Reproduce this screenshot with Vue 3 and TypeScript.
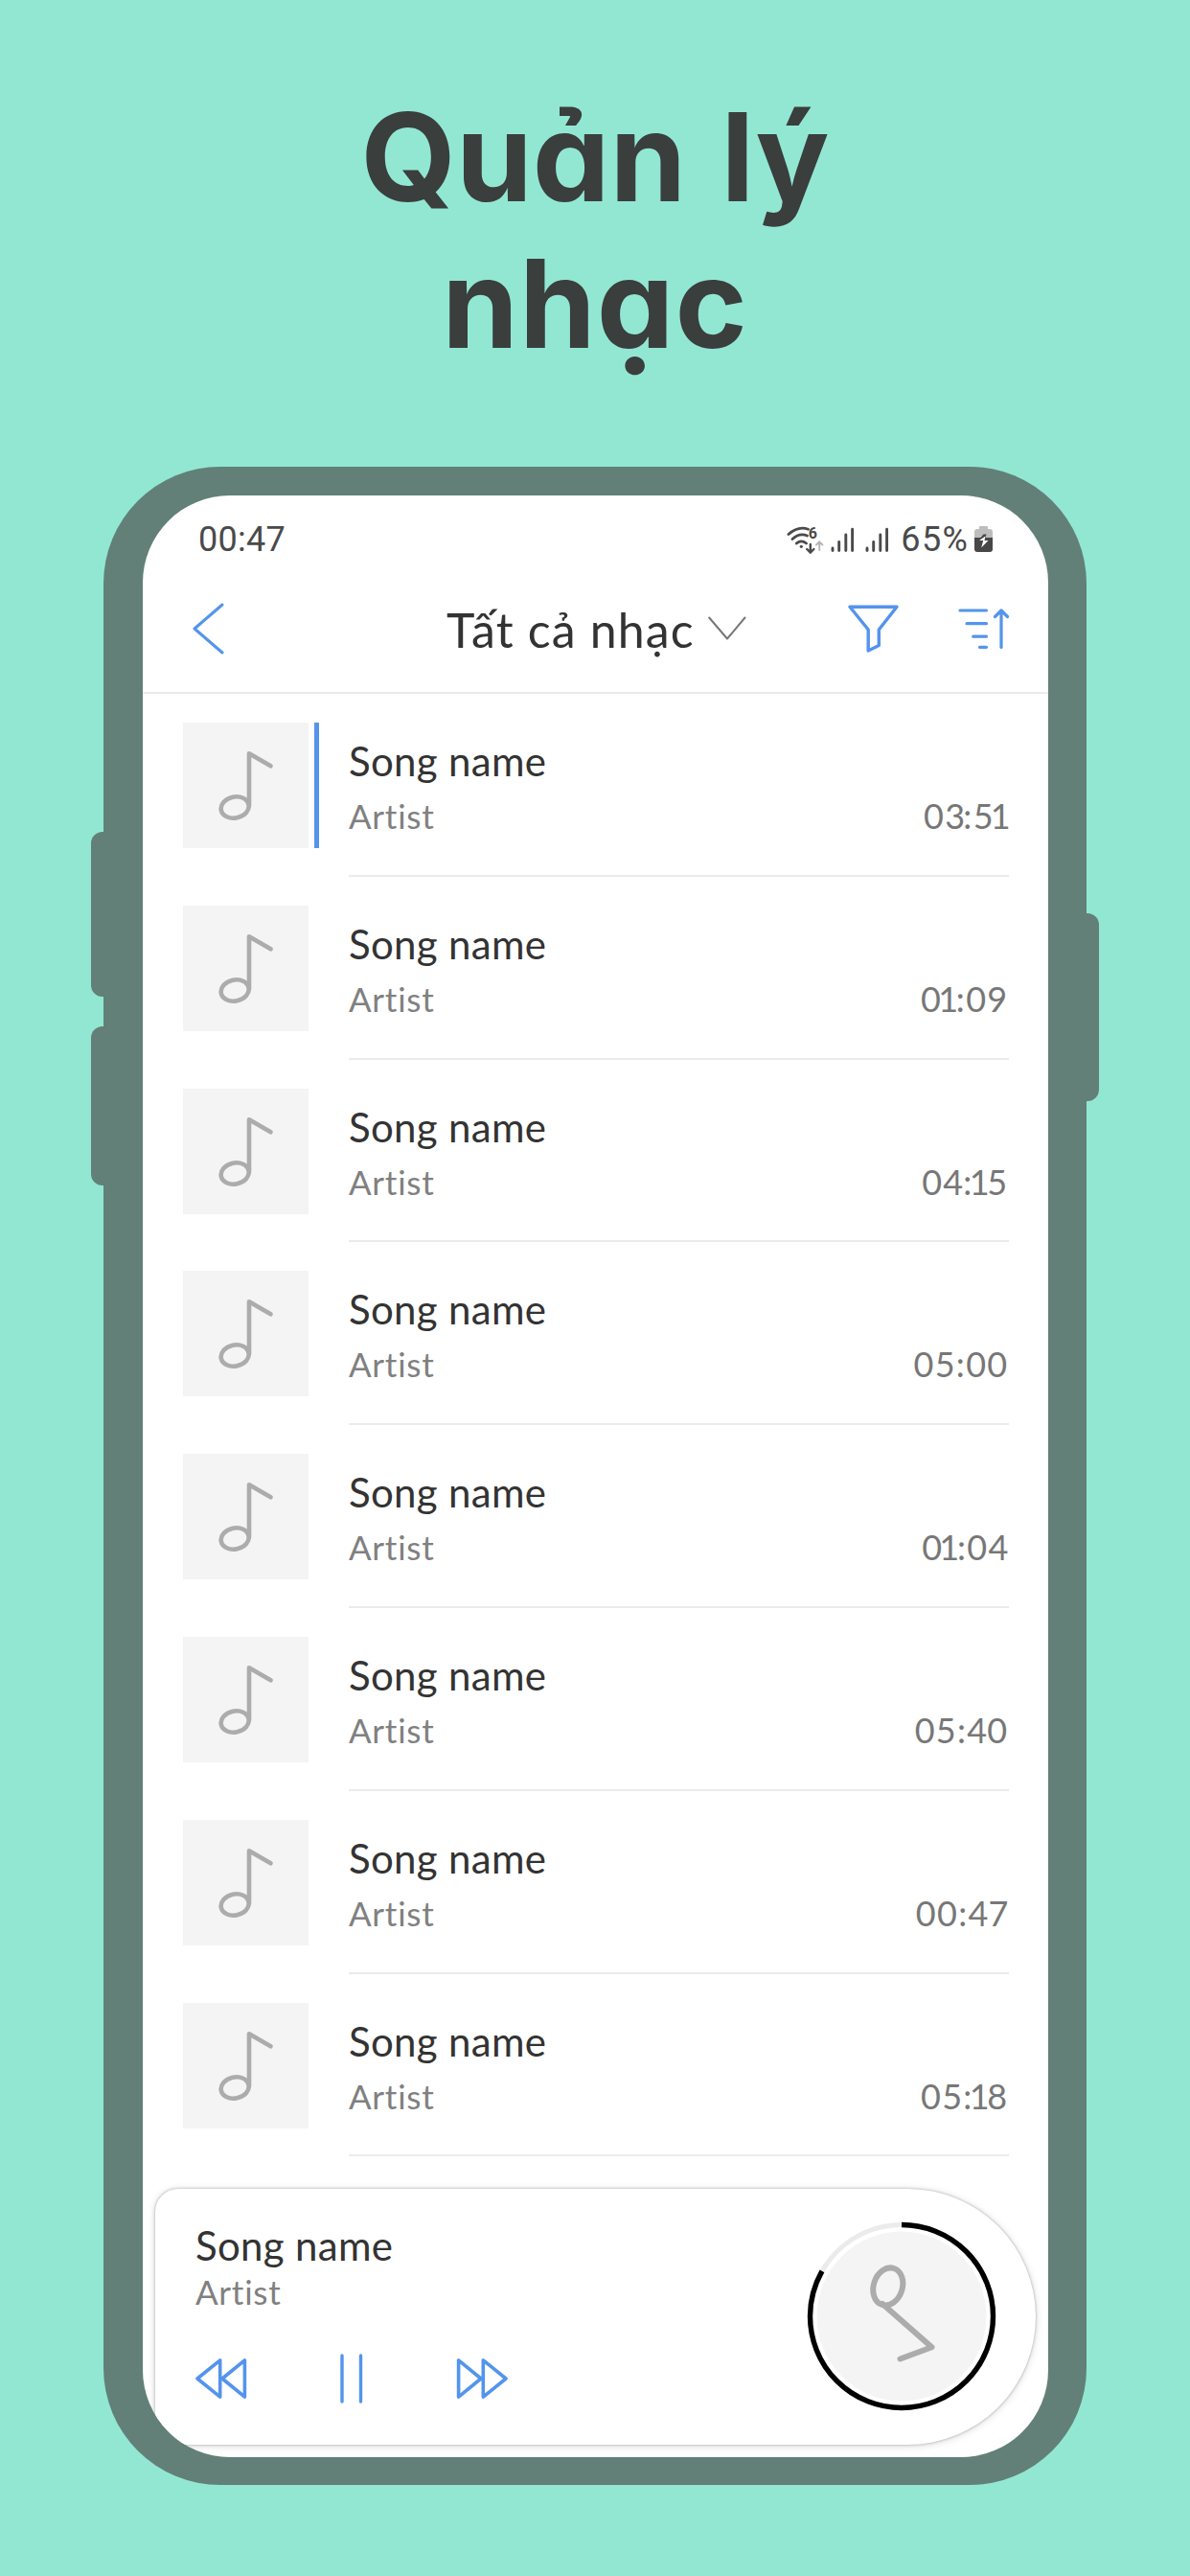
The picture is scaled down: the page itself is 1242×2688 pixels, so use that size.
<script setup lang="ts">
interface Song {
  title: string
  artist: string
  time: string
  active?: boolean
}

const songs: Song[] = [
  { title: 'Song name', artist: 'Artist', time: '03:51', active: true },
  { title: 'Song name', artist: 'Artist', time: '01:09' },
  { title: 'Song name', artist: 'Artist', time: '04:15' },
  { title: 'Song name', artist: 'Artist', time: '05:00' },
  { title: 'Song name', artist: 'Artist', time: '01:04' },
  { title: 'Song name', artist: 'Artist', time: '05:40' },
  { title: 'Song name', artist: 'Artist', time: '00:47' },
  { title: 'Song name', artist: 'Artist', time: '05:18' },
]

const circumference = 2 * Math.PI * 95.5
const progress = 0.831
</script>

<template>
  <main class="poster">
    <h1 class="headline">
      <span class="line one">Quản lý</span>
      <span class="line two">nhạc</span>
    </h1>

    <section class="phone">
      <i class="key left-a"></i>
      <i class="key left-b"></i>
      <i class="key right"></i>

      <div class="screen">
        <div class="status">
          <span class="clock">00:47</span>
          <svg class="radio" width="112" height="32" viewBox="820 546 112 32" fill="none" stroke="#4a4a4a" stroke-linecap="round">
            <path d="M822 556.5Q832 547.5 842.5 551.2" stroke-width="2.8" />
            <path d="M826 561.5Q833.5 554.5 841.5 558" stroke-width="2.8" />
            <path d="M830.3 566Q835.3 561.8 840.6 566" stroke-width="2.8" />
            <circle cx="835.3" cy="569.3" r="1.6" fill="#4a4a4a" stroke="none" />
            <text x="842.8" y="561" class="gen">6</text>
            <path d="M844.8 567v8M841.2 572l3.6 3.6l3.6-3.6" stroke-width="2.4" />
            <path d="M854.2 573v-8M851 567.5l3.2-3.2l3.2 3.2" stroke="#b4b4b4" stroke-width="1.9" />
            <path d="M868 571v2.5M874.7 564.5v9M881.8 557v16.5M888.6 551.3v22.2" stroke-width="2.9" />
            <path d="M904 571v2.5M910.7 564.5v9M917.8 557v16.5M924.6 551.3v22.2" stroke-width="2.9" />
          </svg>
          <span class="percent">65%</span>
          <svg class="battery" width="20" height="28" viewBox="0 0 20 28">
            <path d="M5 3V1q0-1 1-1h7q1 0 1 1v2h2q3 0 3 3v7H0V6q0-3 3-3z" fill="#bdbdbd" />
            <path d="M0 12h19v12q0 3-3 3H3q-3 0-3-3z" fill="#474747" />
            <path d="M9.5 8.5l3 0l-1 3.5h-5z" fill="#474747" />
            <path d="M11.5 10.5L5 15h4.2l-2 7.5L14.5 15h-4z" fill="#fff" />
          </svg>
        </div>

        <header class="bar">
          <svg class="back" width="34" height="54" viewBox="0 0 34 54" fill="none" stroke="#5494ec" stroke-width="3" stroke-linecap="round" stroke-linejoin="round">
            <path d="M31 2L2 27L31 52" />
          </svg>
          <span class="title">Tất cả nhạc</span>
          <svg class="chevron" width="40" height="26" viewBox="0 0 40 26" fill="none" stroke="#777" stroke-width="2" stroke-linecap="round" stroke-linejoin="round">
            <path d="M1.2 1.5L20 23.5L38.5 1.5" />
          </svg>
          <svg class="funnel" width="53" height="50" viewBox="0 0 53 50" fill="none" stroke="#5494ec" stroke-width="3.4" stroke-linejoin="round">
            <path d="M2 2.2H51L32.3 26V42.5L21.2 48V26Z" />
          </svg>
          <svg class="sort" width="54" height="44" viewBox="0 0 54 44" fill="none" stroke="#5494ec" stroke-width="3.2" stroke-linecap="round" stroke-linejoin="round">
            <path d="M2 3H29.5M9 16.7H29.5M15.7 30.2H29.5M22.5 41.3H29.5M45 41.5V3M38.5 9.5L45 3L51.5 9.5" />
          </svg>
        </header>

        <ul class="list">
          <li v-for="(song, i) in songs" :key="i" class="row">
            <div class="tile">
              <svg width="131" height="131" viewBox="0 0 131 131" fill="none" stroke="#acacac" stroke-width="4.6" stroke-linecap="round" stroke-linejoin="round">
                <ellipse cx="54.2" cy="88.5" rx="14.7" ry="11" transform="rotate(-12 54.2 88.5)" />
                <path d="M69 87V32.2L91.5 45.3" />
              </svg>
            </div>
            <i class="marker" :class="{ on: song.active }"></i>
            <div class="info">
              <div class="name">{{ song.title }}</div>
              <div class="meta">
                <span class="artist">{{ song.artist }}</span>
                <span class="time"><span v-for="(c, k) in song.time" :key="k" :class="c === ':' ? 'colon' : `d${c}`">{{ c }}</span></span>
              </div>
            </div>
          </li>
        </ul>

        <section class="player">
          <div class="now">
            <div class="name">Song name</div>
            <div class="artist">Artist</div>
            <div class="controls">
              <svg width="54" height="44" viewBox="0 0 54 44" fill="none" stroke="#5494ec" stroke-width="3.6" stroke-linejoin="round">
                <path d="M25.7 2.8V41.2L2 22Z M51.4 2.8V41.2L28 22Z" />
              </svg>
              <svg width="24" height="54" viewBox="0 0 24 54" fill="none" stroke="#5494ec" stroke-width="3.4" stroke-linecap="round">
                <path d="M2 3V51M21.5 3V51" />
              </svg>
              <svg width="54" height="44" viewBox="0 0 54 44" fill="none" stroke="#5494ec" stroke-width="3.6" stroke-linejoin="round">
                <path d="M2.6 2.8V41.2L26 22Z M28.3 2.8V41.2L52 22Z" />
              </svg>
            </div>
          </div>
          <svg class="disc" width="198" height="198" viewBox="-99 -99 198 198" fill="none">
            <circle r="88.5" fill="#f4f4f4" />
            <circle r="95.5" stroke="#ebebeb" stroke-width="5" />
            <circle r="95.5" stroke="#000" stroke-width="5.4" transform="rotate(-90)" :stroke-dasharray="`${circumference * progress} ${circumference}`" />
            <g stroke="#acacac" stroke-width="6" stroke-linecap="round" stroke-linejoin="round">
              <ellipse cx="-14.2" cy="-31" rx="15" ry="20" transform="rotate(18 -14.2 -31)" />
              <path d="M-20 -13L31.5 32.3L-1.5 44.5" />
            </g>
          </svg>
        </section>
      </div>
    </section>
  </main>
</template>

<style>
body {
  margin: 0;
}
</style>

<style scoped>
.poster {
  width: 1242px;
  height: 2688px;
  box-sizing: border-box;
  padding-top: 87px;
  background: #92e7d3;
  overflow: hidden;
  font-family: Lato, "Noto Sans", sans-serif;
  font-variant-ligatures: none;
}
.headline {
  margin: 0;
  height: 400px;
  display: flex;
  flex-direction: column;
  align-items: center;
  font: 700 128px/153px Inter, sans-serif;
  font-feature-settings: "cv11";
  color: #3a3e3d;
}
.line {
  white-space: pre;
}
.one {
  word-spacing: 6px;
}
.two {
  letter-spacing: 1px;
}
.phone {
  position: relative;
  box-sizing: border-box;
  width: 1026px;
  height: 2105.5px;
  margin-left: 107.5px;
  padding: 30px 39.5px 28.5px 41.5px;
  border-radius: 122px;
  background: #628077;
}
.key {
  position: absolute;
  width: 30px;
  border-radius: 12px;
  background: #628077;
}
.left-a {
  left: -12.5px;
  top: 381px;
  height: 172px;
}
.left-b {
  left: -12.5px;
  top: 584px;
  height: 166px;
}
.right {
  right: -13.5px;
  top: 465.5px;
  height: 196.5px;
}
.screen {
  position: relative;
  display: flex;
  flex-direction: column;
  height: 2047px;
  border-radius: 91px;
  background: #fff;
  overflow: hidden;
}
.status {
  box-sizing: border-box;
  height: 90px;
  padding: 1px 57px 0 58px;
  display: flex;
  align-items: center;
  font: 400 36px/40px Roboto, sans-serif;
  color: #4a4a4a;
}
.clock {
  letter-spacing: 0.3px;
}
.radio {
  margin-left: auto;
}
.gen {
  font: 700 16px Roboto, sans-serif;
  fill: #4a4a4a;
  stroke: none;
}
.percent {
  margin-left: 7px;
  letter-spacing: 1.5px;
}
.battery {
  margin-left: 5.5px;
}
.bar {
  box-sizing: border-box;
  height: 117px;
  padding: 0 40px 17px 52px;
  border-bottom: 2.4px solid #ebebeb;
  display: flex;
  align-items: center;
}
.title {
  margin-left: 231px;
  padding-top: 2px;
  font-size: 50px;
  line-height: 60px;
  letter-spacing: 1.15px;
  color: #333;
  white-space: nowrap;
}
.chevron {
  margin-left: 14px;
}
.funnel {
  margin-left: auto;
}
.sort {
  margin-left: 62px;
}
.list {
  margin: 0;
  padding: 0 41.5px 0 42px;
  list-style: none;
}
.row {
  height: 190.8px;
  display: flex;
  align-items: flex-start;
}
.tile {
  margin-top: 30px;
  width: 131px;
  height: 131px;
  background: #f4f4f4;
}
.tile svg {
  display: block;
}
.marker {
  margin: 30px 31px 0 5.5px;
  width: 5.5px;
  height: 131px;
}
.marker.on {
  background: #5494ec;
}
.info {
  flex: 1;
  box-sizing: border-box;
  height: 190.8px;
  padding-top: 45px;
  border-bottom: 2.4px solid #ebebeb;
}
.name {
  font-size: 42px;
  line-height: 50px;
  letter-spacing: 0.3px;
  color: #333;
}
.artist {
  font-size: 35px;
  line-height: 40px;
  letter-spacing: 0.75px;
  color: #808080;
}
.meta {
  margin-top: 12px;
  display: flex;
  justify-content: space-between;
}
.time {
  font-size: 36px;
  line-height: 40px;
  letter-spacing: 1.3px;
  color: #777;
}
.d1 {
  margin: 0 -3.5px 0 -4px;
}
.d3 {
  margin-right: -3px;
}
.d4,
.d7 {
  margin-right: -1.2px;
}
.player {
  position: absolute;
  left: 13px;
  top: 1767px;
  box-sizing: border-box;
  width: 919px;
  height: 267px;
  padding: 34px 41.5px 0 42px;
  display: flex;
  justify-content: space-between;
  border-radius: 24px 133.5px 133.5px 24px;
  background: #fff;
  box-shadow: 0 0 3px rgba(0, 0, 0, 0.3), 0 1px 9px rgba(0, 0, 0, 0.15);
}
.now .artist {
  line-height: 42px;
  margin-top: 2px;
}
.controls {
  margin-top: 43px;
  display: flex;
  align-items: center;
}
.controls svg:nth-child(2) {
  margin: 0 97px 0 97px;
}
</style>
